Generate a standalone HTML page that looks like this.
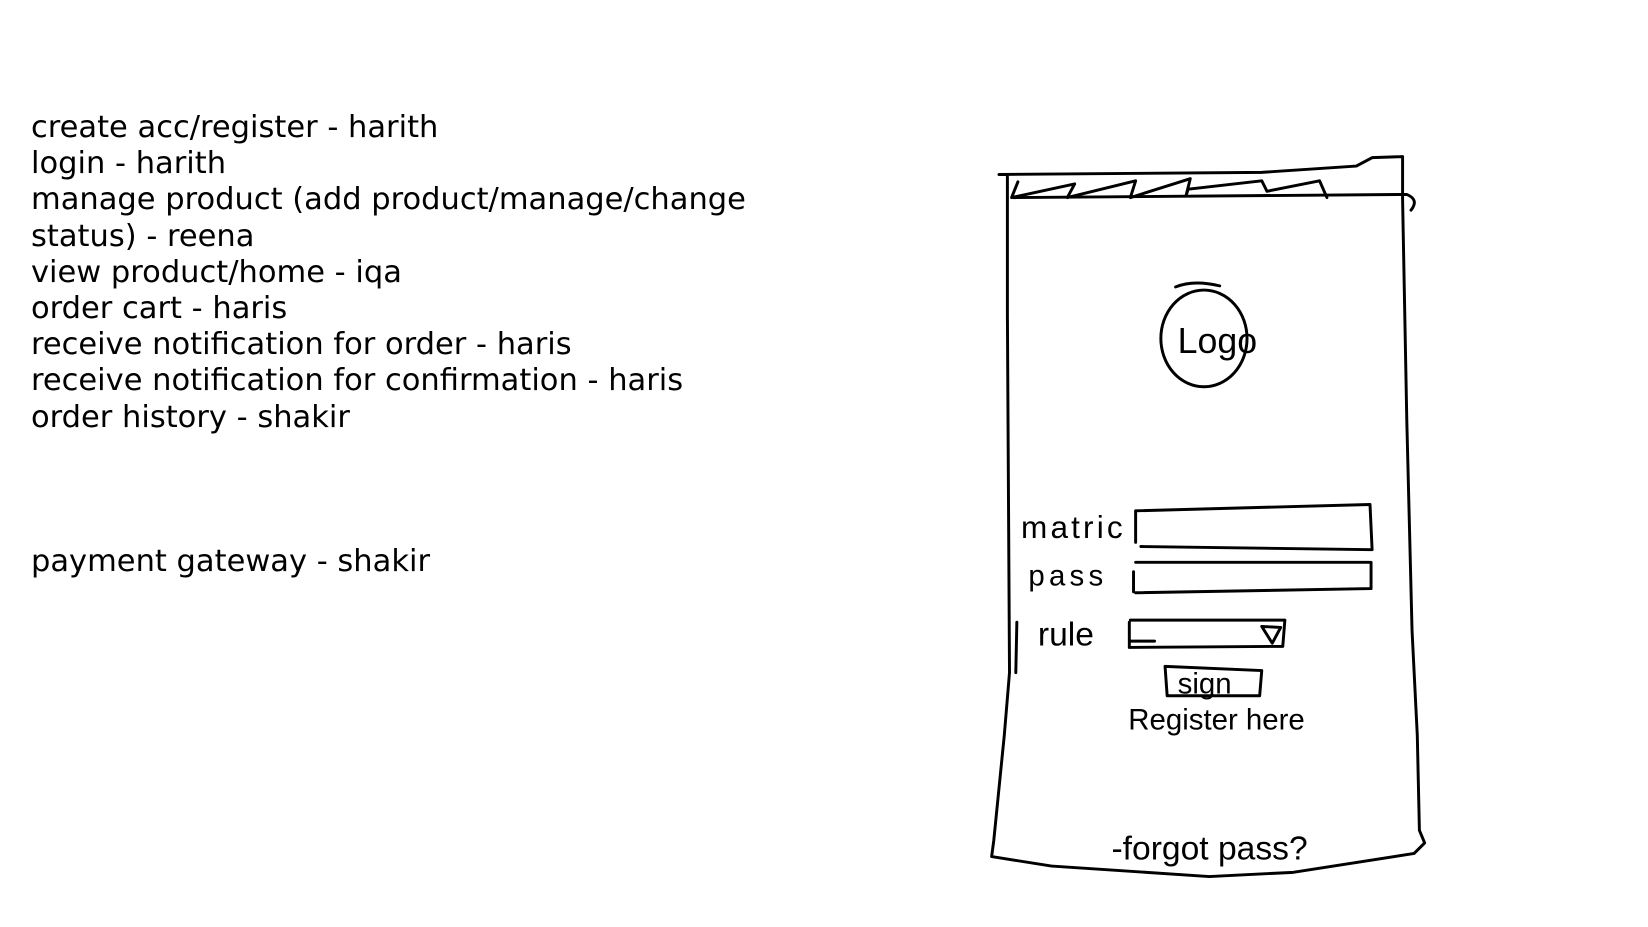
<!DOCTYPE html>
<html><head><meta charset="utf-8"><style>
html,body{margin:0;padding:0;background:#fff;width:1648px;height:927px;overflow:hidden}
.t{position:absolute;left:31px;top:110px;font-family:"DejaVu Sans",sans-serif;font-size:30.5px;line-height:36.2px;color:#000;white-space:pre}
svg{position:absolute;left:0;top:0}
</style></head><body>
<div class="t">create acc/register - harith
login - harith
manage product (add product/manage/change
status) - reena
view product/home - iqa
order cart - haris
receive notification for order - haris
receive notification for confirmation - haris
order history - shakir



payment gateway - shakir</div>
<svg width="1648" height="927" viewBox="0 0 1567 882" fill="none" stroke="#000" stroke-width="2.8" stroke-linecap="round" stroke-linejoin="round">
<path d="M950 166 L1200 164 L1290 158 L1305 150 L1334 149 L1334 190 L1338 400 L1343 600 L1348 700 L1350 790 L1355 802 L1345 812 L1230 830 L1150 834 L1000 824 L943 815 L945 800 L955 700 L960 640 L958 300 L958 168"/>
<path d="M964 188 L1338 185 Q1350 190 1342 200"/>
<path d="M962 188 L968 173 M962 188 L1022 175 L1015 188 L1080 172 L1075 188 L1132 170 L1128 186 L1130 180 L1200 172 L1205 182 L1255 172 L1262 188"/>
<ellipse cx="1145" cy="322" rx="41" ry="46"/>
<path d="M1118 273 Q1135 266 1160 272"/>
<text x="1120" y="336" font-family="Liberation Sans Narrow,Liberation Sans,sans-serif" font-size="34" fill="#000" stroke="none">Logo</text>
<text x="971" y="512" font-family="Liberation Sans,sans-serif" font-size="30" fill="#000" stroke="none" letter-spacing="3">matric</text>
<path d="M1080 486 L1303 480 L1305 523 L1085 520 M1080 486 L1080 516"/>
<text x="978" y="557" font-family="Liberation Sans,sans-serif" font-size="28" fill="#000" stroke="none" letter-spacing="4">pass</text>
<path d="M1080 535 L1304 535 L1304 560 L1080 564 M1078 544 L1078 563"/>
<path d="M967 592 L966 640"/>
<text x="987" y="614" font-family="Liberation Sans,sans-serif" font-size="32" fill="#000" stroke="none">rule</text>
<path d="M1075 590 L1222 590 L1220 615 L1074 616 L1074 592 M1075 610 L1098 610 M1200 596 L1218 597 L1210 612 Z"/>
<path d="M1108 634 L1200 638 L1198 662 L1110 662 Z"/>
<text x="1120" y="660" font-family="Liberation Sans Narrow,Liberation Sans,sans-serif" font-size="28" fill="#000" stroke="none">sign</text>
<text x="1073" y="694" font-family="Liberation Sans Narrow,Liberation Sans,sans-serif" font-size="28" fill="#000" stroke="none">Register here</text>
<text x="1057" y="818" font-family="Liberation Sans Narrow,Liberation Sans,sans-serif" font-size="32" fill="#000" stroke="none">-forgot pass?</text>
</svg>
</body></html>
